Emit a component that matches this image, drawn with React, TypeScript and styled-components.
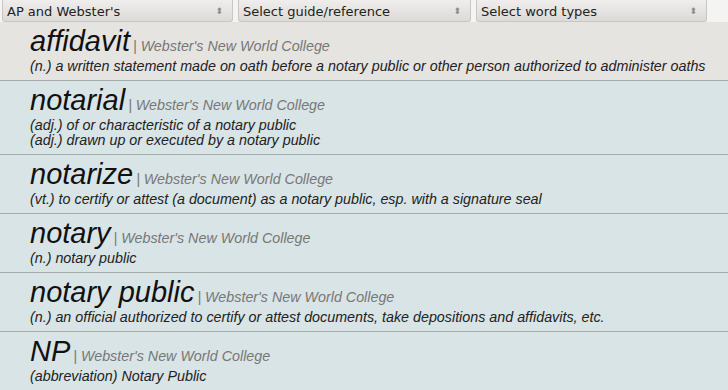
import styled, { createGlobalStyle } from 'styled-components';

const GlobalStyle = createGlobalStyle`
  body {
    margin: 0;
    background: #d9e4e6;
    font-family: "Liberation Sans", Arial, sans-serif;
  }
`;

const Toolbar = styled.div`
  display: flex;
  gap: 5px;
  padding: 0 2px;
  height: 22px;
  background: #f4f4f3;
`;

const Select = styled.div<{ $width: number }>`
  box-sizing: border-box;
  width: ${(p) => p.$width}px;
  height: 22px;
  display: flex;
  align-items: center;
  justify-content: space-between;
  padding: 1px 9px 0 4px;
  border: 1px solid #c9c7c4;
  border-top: none;
  border-radius: 0 0 3px 3px;
  background: linear-gradient(#efeeec, #dcdad7);
  font-family: "DejaVu Sans", sans-serif;
  font-size: 13px;
  color: #222;
`;

const Arrows = styled.span`
  font-size: 9px;
  color: #8a8a8a;
  line-height: 1;
`;

const Entry = styled.div<{ $active?: boolean }>`
  padding: 4px 0 6px 30px;
  border-bottom: 1px solid #a8abab;
  background: ${(p) => (p.$active ? '#e6e4e1' : '#d9e4e6')};
`;

const Word = styled.div`
  font-style: italic;
  font-size: 29px;
  line-height: 30px;
  height: 30px;
  margin-bottom: 3px;
  color: #111;
  white-space: nowrap;
`;

const Source = styled.span`
  font-size: 14.3px;
  line-height: 1;
  color: #777;
  margin-left: 3px;
`;

const Definition = styled.div`
  font-style: italic;
  font-size: 14.3px;
  line-height: 15px;
  color: #222;
  white-space: nowrap;
`;

const entries = [
  {
    word: 'affidavit',
    defs: ['(n.) a written statement made on oath before a notary public or other person authorized to administer oaths'],
    active: true,
  },
  {
    word: 'notarial',
    defs: ['(adj.) of or characteristic of a notary public', '(adj.) drawn up or executed by a notary public'],
  },
  {
    word: 'notarize',
    defs: ['(vt.) to certify or attest (a document) as a notary public, esp. with a signature seal'],
  },
  { word: 'notary', defs: ['(n.) notary public'] },
  {
    word: 'notary public',
    defs: ['(n.) an official authorized to certify or attest documents, take depositions and affidavits, etc.'],
  },
  { word: 'NP', defs: ['(abbreviation) Notary Public'] },
];

function App() {
  return (
    <>
      <GlobalStyle />
      <Toolbar>
        <Select $width={231}>
          AP and Webster's<Arrows>⬍</Arrows>
        </Select>
        <Select $width={233}>
          Select guide/reference<Arrows>⬍</Arrows>
        </Select>
        <Select $width={231}>
          Select word types<Arrows>⬍</Arrows>
        </Select>
      </Toolbar>
      {entries.map((e) => (
        <Entry key={e.word} $active={e.active}>
          <Word>
            {e.word}
            <Source>| Webster's New World College</Source>
          </Word>
          {e.defs.map((d) => (
            <Definition key={d}>{d}</Definition>
          ))}
        </Entry>
      ))}
    </>
  );
}

export default App;
